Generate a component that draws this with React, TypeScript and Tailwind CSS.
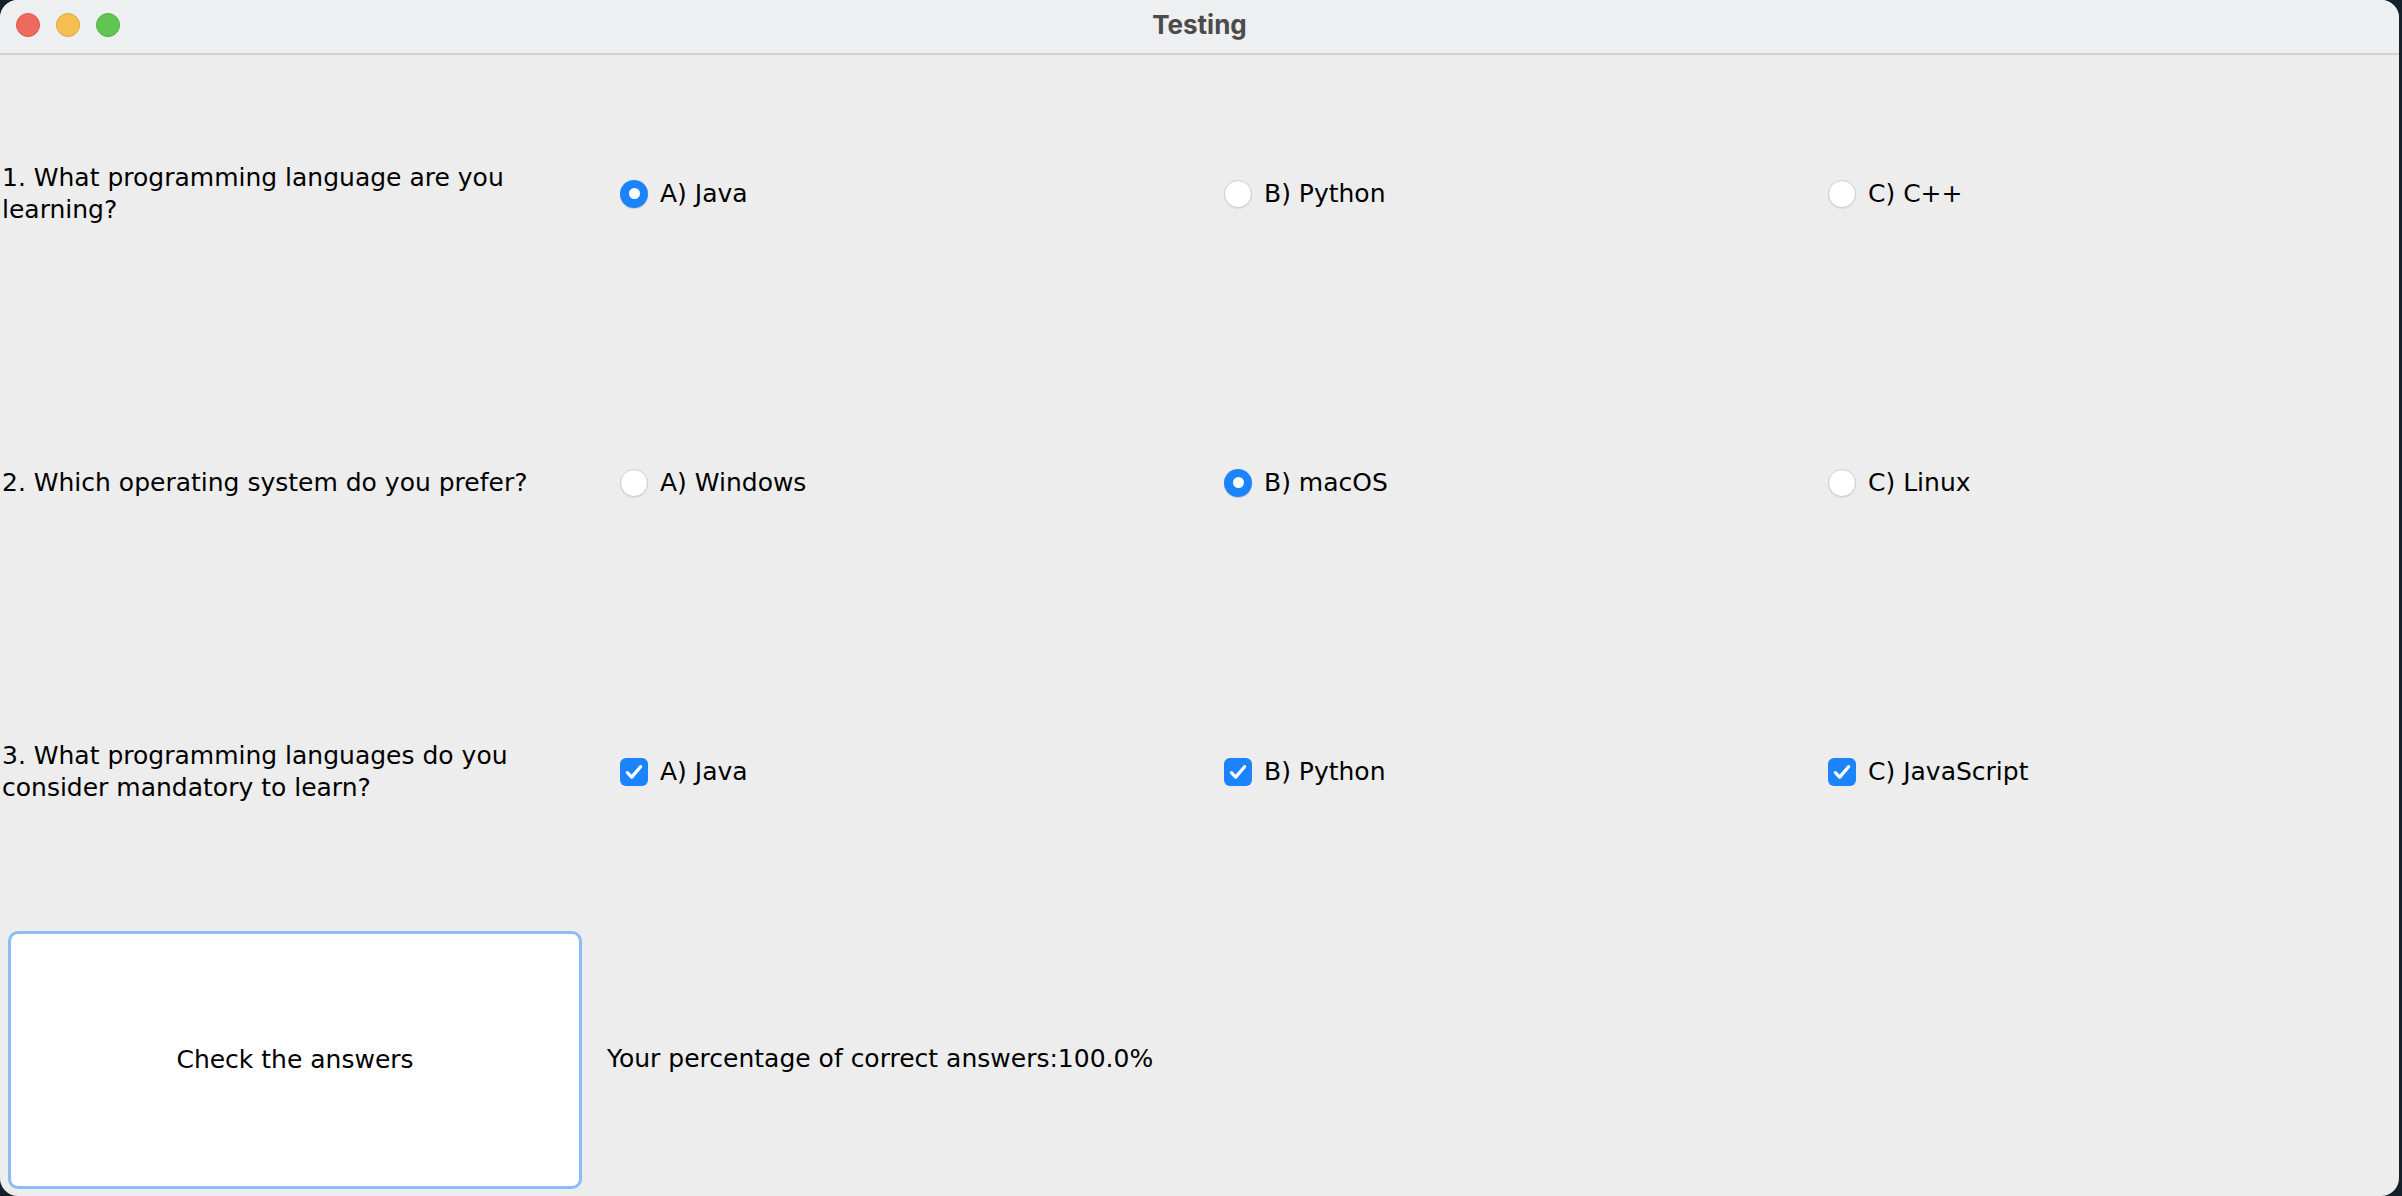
const questions = [
  {
    text: "1. What programming language are you learning?",
    kind: "radio",
    options: [
      { label: "A) Java", on: true },
      { label: "B) Python", on: false },
      { label: "C) C++", on: false },
    ],
  },
  {
    text: "2. Which operating system do you prefer?",
    kind: "radio",
    options: [
      { label: "A) Windows", on: false },
      { label: "B) macOS", on: true },
      { label: "C) Linux", on: false },
    ],
  },
  {
    text: "3. What programming languages do you consider mandatory to learn?",
    kind: "check",
    options: [
      { label: "A) Java", on: true },
      { label: "B) Python", on: true },
      { label: "C) JavaScript", on: true },
    ],
  },
];

const Radio = ({ on }: { on: boolean }) =>
  on ? (
    <div className="w-[28px] h-[28px] rounded-full bg-[#1b84fc] flex items-center justify-center shadow-[0_1px_1px_rgba(0,0,0,0.15)]">
      <div className="w-[11px] h-[11px] rounded-full bg-white" />
    </div>
  ) : (
    <div className="w-[28px] h-[28px] rounded-full bg-white border border-[#cfcfcf] shadow-[0_1px_1px_rgba(0,0,0,0.08)]" />
  );

const Check = () => (
  <div className="w-[28px] h-[28px] rounded-[6px] bg-[#1b84fc] flex items-center justify-center">
    <svg width="22" height="22" viewBox="0 0 20 20" fill="none">
      <path d="M4 10.6l3.9 4L16 5.2" stroke="white" strokeWidth="3" strokeLinecap="round" strokeLinejoin="round" />
    </svg>
  </div>
);

export default function App() {
  return (
    <div className="w-full h-[1196px] bg-[#14202c] overflow-hidden">
      <div
        className="w-[2399px] h-[1196px] rounded-[18px] overflow-hidden bg-[#ededed] flex flex-col text-black"
        style={{ fontFamily: '"DejaVu Sans", "Liberation Sans", sans-serif' }}
      >
        <div className="relative h-[55px] shrink-0 bg-[#eeeff0] border-b-[2px] border-[#d2d2d2] flex items-center justify-center">
          <div className="absolute left-[16px] top-[13px] flex gap-[16px]">
            <div className="w-[24px] h-[24px] rounded-full bg-[#ee6a5f] border border-[#d9564b]" />
            <div className="w-[24px] h-[24px] rounded-full bg-[#f5bf4f] border border-[#dea63c]" />
            <div className="w-[24px] h-[24px] rounded-full bg-[#61c554] border border-[#4fae43]" />
          </div>
          <span
            className="text-[26px] font-bold text-[#4b4b4b] -mt-[4px]"
            style={{ fontFamily: 'Inter, "Liberation Sans", sans-serif' }}
          >
            Testing
          </span>
        </div>

        <div className="flex-1 grid grid-cols-[604px_604px_604px_1fr] grid-rows-[289px_289px_289px_1fr] text-[25px] leading-[32px]">
          {questions.map((q, i) => (
            <div key={i} className="contents">
              <div className="flex items-center pl-[2px] -mt-[12px]">
                <p className="w-[570px]">{q.text}</p>
              </div>
              {q.options.map((o, j) => (
                <div key={j} className="flex items-center pl-[16px] gap-[12px] -mt-[12px]">
                  {q.kind === "radio" ? <Radio on={o.on} /> : <Check />}
                  <span>{o.label}</span>
                </div>
              ))}
            </div>
          ))}

          <div className="pl-[8px] pr-[22px] pt-[9px] pb-[7px]">
            <button className="w-full h-full bg-white border-[3px] border-[#8dbbf3] rounded-[10px] text-[25px] flex items-center justify-center">
              Check the answers
            </button>
          </div>
          <div className="flex items-center pl-[3px] col-span-3">
            <span>Your percentage of correct answers:100.0%</span>
          </div>
        </div>
      </div>
    </div>
  );
}
